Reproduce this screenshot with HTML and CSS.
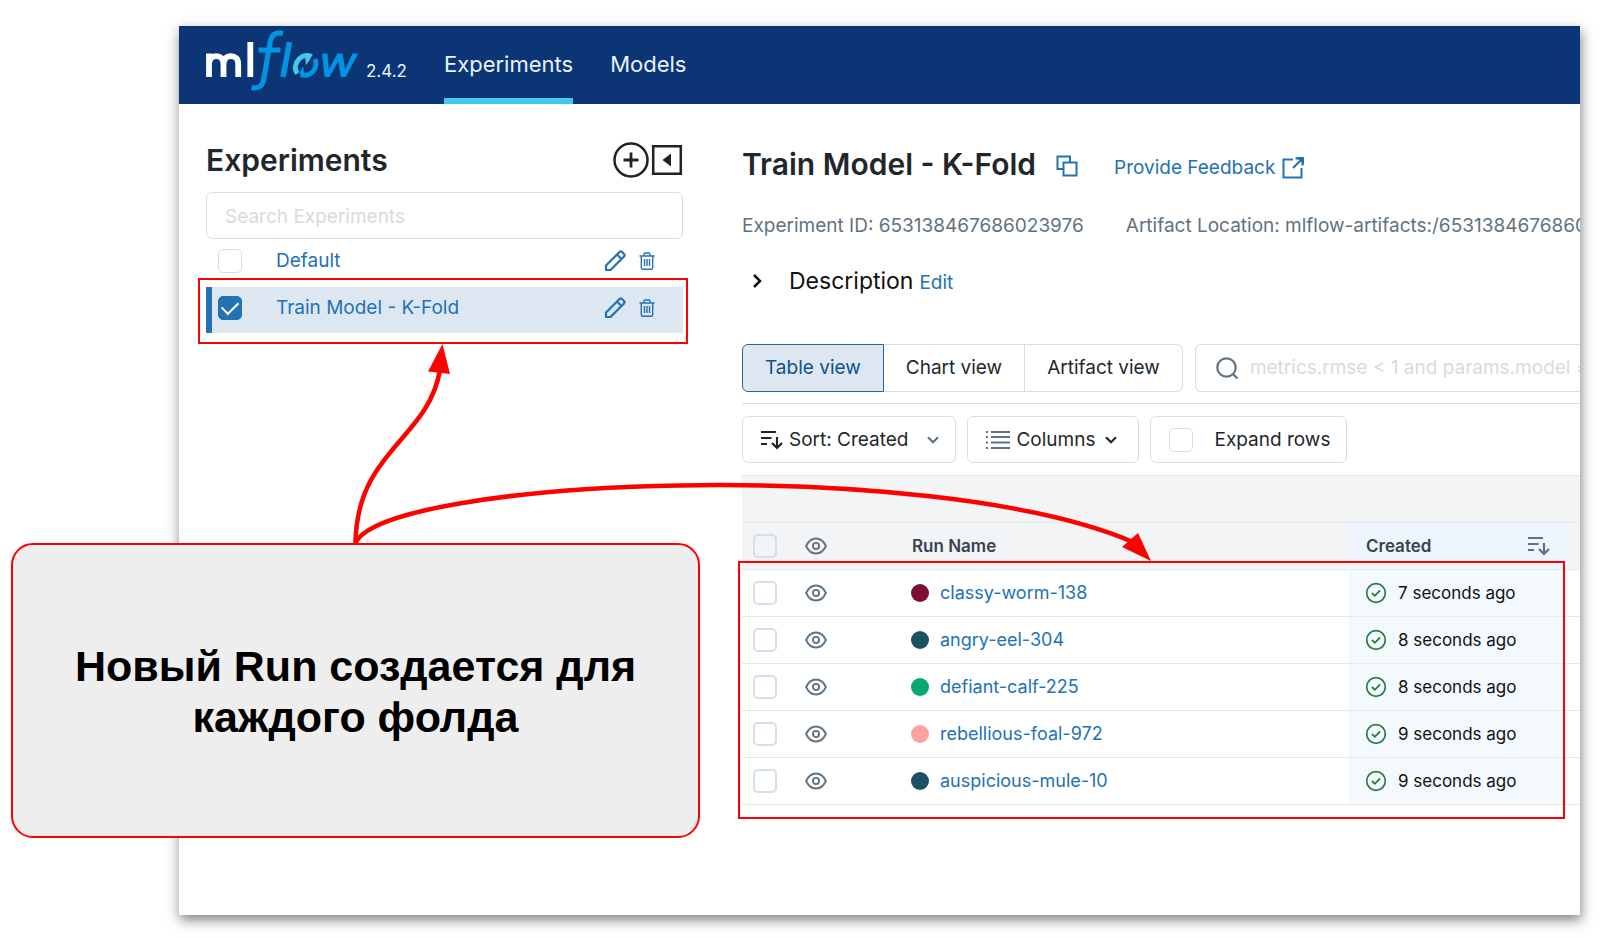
FILE: index.html
```html
<!DOCTYPE html>
<html lang="ru">
<head>
<meta charset="utf-8">
<meta name="viewport" content="width=device-width, initial-scale=1">
<title>MLflow – Train Model - K-Fold</title>
<link rel="stylesheet" href="styles.css">
</head>
<body>
<svg class="defs" aria-hidden="true">
  <symbol id="pencil" viewBox="0 0 22 22"><path d="M2 20v-4.500L15.500 2a1.800 1.800 0 0 1 2.500 0l2 2a1.800 1.800 0 0 1 0 2.500L6.500 20zM13 4.500l4.500 4.500" fill="none" stroke="currentColor" stroke-width="2.200" stroke-linejoin="round"/></symbol>
  <symbol id="trash" viewBox="0 0 16 18"><path d="M.5 4h15M2.300 4v11.700a1.500 1.500 0 0 0 1.500 1.500h8.400a1.500 1.500 0 0 0 1.500-1.500V4M5 4V2.200A1.200 1.200 0 0 1 6.200 1h3.600A1.200 1.200 0 0 1 11 2.200V4M5.500 7v7M8 7v7M10.500 7v7" fill="none" stroke="currentColor" stroke-width="1.400"/></symbol>
  <symbol id="eye" viewBox="0 0 20 16"><path d="M1 8C3 3.700 6.200 1.200 10 1.200S17 3.700 19 8c-2 4.300-5.200 6.800-9 6.800S3 12.300 1 8z" fill="none" stroke="currentColor" stroke-width="1.700"/><circle cx="10" cy="8" r="2.800" fill="none" stroke="currentColor" stroke-width="1.700"/></symbol>
  <symbol id="sort" viewBox="0 0 22 20"><path d="M0 2h15M0 8h10.500M0 14h6M16 7v11M11 13l5 5 5-5" fill="none" stroke="currentColor" stroke-width="2.200"/></symbol>
  <symbol id="chevron" viewBox="0 0 12 8"><path d="M1 1.200l5 5 5-5" fill="none" stroke="currentColor" stroke-width="2.200"/></symbol>
  <symbol id="done" viewBox="0 0 22 22"><circle cx="11" cy="11" r="9.300" fill="none" stroke="currentColor" stroke-width="1.700"/><path d="M7 11l2.800 2.800L15 8.500" fill="none" stroke="currentColor" stroke-width="1.800"/></symbol>
</svg>
<div class="slide">
  <div class="app">
    <header class="topbar">
      <a class="logo" href="#" aria-label="mlflow">
        <svg width="154" height="62" viewBox="0 0 154 62">
          <g fill="none" stroke="#fff" stroke-width="5.800">
            <path d="M3 47V23.500M3 35c0-6 2.700-8.800 7.200-8.800s7.300 2.600 7.300 7.600V47M17.500 35c0-6 3-8.800 7.400-8.800s7.300 2.600 7.300 7.600V47M44.300 47V12"/>
          </g>
          <path d="M77 3.500c-7-2-11.500 1-13 9L58 48c-1.300 8-5 11-12.500 9.500M52.500 20h22" fill="none" stroke="#0194e2" stroke-width="5.200"/>
          <path d="M83.500 12L77 47" fill="none" stroke="#0194e2" stroke-width="5.500"/>
          <path d="M91.500 43.500c-3.500-4-2.500-10.500 1.500-14.500 3.500-3.500 8-4.300 12-3" fill="none" stroke="#43c9ed" stroke-width="4.800"/>
          <path d="M99 26l8-2-4 7-3 4z" fill="#43c9ed"/>
          <path d="M109 29c2 4 1 9.500-2.500 13-3.500 3.300-8 4-11.500 2.500" fill="none" stroke="#0194e2" stroke-width="4.800"/>
          <path d="M93 44l4-8 1 6 3 4z" fill="#0194e2"/>
          <path d="M116 23.500h5.500l1.200 16L131.500 23.500h5.200l2.300 16 7.500-16h5.700L139.700 47h-4.800l-2.600-15.500L123.500 47h-4.900z" fill="#0194e2"/>
        </svg>
      </a>
      <span class="version">2.4.2</span>
      <nav class="nav">
        <a class="nav-link is-active" href="#">Experiments</a>
        <a class="nav-link" href="#">Models</a>
      </nav>
    </header>
    <div class="body">
      <aside class="sidebar">
        <div class="side-head">
          <h2 class="heading">Experiments</h2>
          <button class="icon-btn" aria-label="New experiment"><svg width="36" height="36" viewBox="0 0 36 36" fill="none" stroke="#222" stroke-width="2.500"><circle cx="18" cy="18" r="16.500"/><path d="M18 10.500v15M10.500 18h15" stroke-width="2.800"/></svg></button>
          <button class="icon-btn" aria-label="Collapse"><svg width="32" height="32" viewBox="0 0 32 32"><path d="M2.200 2.200h27.600v27.600H2.200z" fill="none" stroke="#222" stroke-width="2.500"/><path d="M20 9.500v13L11.500 16z" fill="#222"/></svg></button>
        </div>
        <input class="side-search" type="text" placeholder="Search Experiments" aria-label="Search Experiments">
        <div class="exp">
          <input class="check" type="checkbox" aria-label="Select Default">
          <a class="exp-name" href="#">Default</a>
          <button class="icon-btn" aria-label="Rename"><svg width="22" height="22"><use href="#pencil"/></svg></button>
          <button class="icon-btn" aria-label="Delete"><svg width="16" height="18"><use href="#trash"/></svg></button>
        </div>
        <div class="exp is-selected">
          <input class="check" type="checkbox" checked aria-label="Select Train Model - K-Fold">
          <a class="exp-name" href="#">Train Model - K-Fold</a>
          <button class="icon-btn" aria-label="Rename"><svg width="22" height="22"><use href="#pencil"/></svg></button>
          <button class="icon-btn" aria-label="Delete"><svg width="16" height="18"><use href="#trash"/></svg></button>
        </div>
      </aside>
      <main class="main">
        <div class="title-row">
          <h1 class="heading">Train Model - K-Fold</h1>
          <button class="icon-btn copy" aria-label="Copy"><svg width="22" height="22" viewBox="0 0 22 22" fill="none" stroke="currentColor" stroke-width="2"><path d="M7 14H1.500V1.500h12.500V7"/><path d="M7.500 7.500h13v13h-13z"/></svg></button>
          <a class="feedback" href="#">Provide Feedback <svg width="22" height="22" viewBox="0 0 22 22" fill="none" stroke="currentColor" stroke-width="2"><path d="M11 2.500H1.500v18h18V11M13.500 1.500h7V8.500M20.500 1.500L11 11"/><path d="M14 0h8v8z" fill="currentColor" stroke="none"/></svg></a>
        </div>
        <div class="meta"><span>Experiment ID: 653138467686023976</span><span>Artifact Location: mlflow-artifacts:/653138467686023976</span></div>
        <div class="desc">
          <button class="icon-btn" aria-label="Expand"><svg width="12" height="16" viewBox="0 0 12 16"><path d="M2 2l6 6-6 6" fill="none" stroke="#111" stroke-width="2.500"/></svg></button>
          <span class="desc-label">Description</span>
          <a href="#">Edit</a>
        </div>
        <div class="views">
          <div class="tabs">
            <button class="tab is-active">Table view</button>
            <button class="tab">Chart view</button>
            <button class="tab">Artifact view</button>
          </div>
          <label class="search"><svg width="22" height="22" viewBox="0 0 22 22" fill="none" stroke="#5f7281" stroke-width="2.200"><circle cx="10.500" cy="10.500" r="9.200"/><path d="M17 17l4.500 4.500"/></svg><input type="text" placeholder="metrics.rmse &lt; 1 and params.model = &quot;tree&quot;" aria-label="Search runs"></label>
        </div>
        <div class="tools">
          <button class="tool sort"><svg width="22" height="20"><use href="#sort"/></svg>Sort: Created<svg class="caret" width="12" height="8"><use href="#chevron"/></svg></button>
          <button class="tool cols"><svg width="24" height="20" viewBox="0 0 24 20" stroke="#5f7281" stroke-width="2.200"><path d="M5 2h19M5 7h19M5 12.500h19M5 18h19M0 2h2M0 7h2M0 12.500h2M0 18h2"/></svg>Columns<svg class="caret" width="12" height="8"><use href="#chevron"/></svg></button>
          <label class="tool expand"><input class="check" type="checkbox">Expand rows</label>
        </div>
        <table class="runs">
          <colgroup><col class="c-check"><col class="c-eye"><col><col class="c-created"><col class="c-rest"></colgroup>
          <thead>
            <tr class="group"><th colspan="5"></th></tr>
            <tr>
              <th><input class="check" type="checkbox" aria-label="Select all"></th>
              <th><svg class="eye" width="22" height="18"><use href="#eye"/></svg></th>
              <th class="name-head">Run Name</th>
              <th class="created"><div class="cell">Created<svg class="sort-icon" width="22" height="20"><use href="#sort"/></svg></div></th>
              <th></th>
            </tr>
          </thead>
          <tbody>
            <tr><td><input class="check" type="checkbox" aria-label="Select classy-worm-138"></td><td><svg class="eye" width="22" height="18"><use href="#eye"/></svg></td><td><div class="cell run"><i class="dot maroon"></i><a href="#">classy-worm-138</a></div></td><td class="created"><div class="cell"><svg class="done" width="22" height="22"><use href="#done"/></svg>7 seconds ago</div></td><td></td></tr>
            <tr><td><input class="check" type="checkbox" aria-label="Select angry-eel-304"></td><td><svg class="eye" width="22" height="18"><use href="#eye"/></svg></td><td><div class="cell run"><i class="dot teal"></i><a href="#">angry-eel-304</a></div></td><td class="created"><div class="cell"><svg class="done" width="22" height="22"><use href="#done"/></svg>8 seconds ago</div></td><td></td></tr>
            <tr><td><input class="check" type="checkbox" aria-label="Select defiant-calf-225"></td><td><svg class="eye" width="22" height="18"><use href="#eye"/></svg></td><td><div class="cell run"><i class="dot green"></i><a href="#">defiant-calf-225</a></div></td><td class="created"><div class="cell"><svg class="done" width="22" height="22"><use href="#done"/></svg>8 seconds ago</div></td><td></td></tr>
            <tr><td><input class="check" type="checkbox" aria-label="Select rebellious-foal-972"></td><td><svg class="eye" width="22" height="18"><use href="#eye"/></svg></td><td><div class="cell run"><i class="dot pink"></i><a href="#">rebellious-foal-972</a></div></td><td class="created"><div class="cell"><svg class="done" width="22" height="22"><use href="#done"/></svg>9 seconds ago</div></td><td></td></tr>
            <tr><td><input class="check" type="checkbox" aria-label="Select auspicious-mule-10"></td><td><svg class="eye" width="22" height="18"><use href="#eye"/></svg></td><td><div class="cell run"><i class="dot teal"></i><a href="#">auspicious-mule-10</a></div></td><td class="created"><div class="cell"><svg class="done" width="22" height="22"><use href="#done"/></svg>9 seconds ago</div></td><td></td></tr>
          </tbody>
        </table>
      </main>
    </div>
  </div>
  <div class="mark mark-exp"></div>
  <div class="mark mark-runs"></div>
  <svg class="arrows" width="1180" height="580" viewBox="0 0 1180 580" aria-hidden="true">
    <g fill="none" stroke="#f00" stroke-width="4.500">
      <path d="M355.500 543C357 450 428 440 440 370"/>
      <path d="M355.500 543C385 478 930 455 1133 542"/>
    </g>
    <path d="M442.500 344l7.500 30-22-2.500zM1151 561l-29-14 16-14z" fill="#f00"/>
  </svg>
  <div class="callout">Новый Run создается для каждого фолда</div>
</div>
</body>
</html>
```
FILE: styles.css
```css
* { box-sizing: border-box; }
body { margin: 0; background: #fff; color: #1f272d; font: 19px/24px Inter, "Liberation Sans", sans-serif; }
a { color: #2272b4; text-decoration: none; }
button, input { font: inherit; color: inherit; }
svg { flex: none; display: block; }
.defs { position: absolute; width: 0; height: 0; }
.slide { position: relative; display: flex; min-height: 100vh; padding: 26px 24px 23px 179px; overflow: hidden; }
.app { flex: 1; min-width: 0; display: flex; flex-direction: column; background: #fff; box-shadow: 1px 5px 12px rgba(0, 0, 0, .5); }

.topbar { display: flex; height: 78px; padding-left: 27px; background: #0b3574; color: #e7f1fb; }
.logo { padding-top: 4px; }
.version { margin-left: 6px; padding-top: 33px; font-size: 17px; }
.nav { display: flex; gap: 37px; margin-left: 37px; font-size: 22px; }
.nav-link { display: flex; align-items: center; color: #e7f1fb; border-top: 4px solid transparent; border-bottom: 6px solid transparent; }
.nav-link.is-active { border-bottom-color: #43c9ed; }

.body { flex: 1; display: flex; }
.sidebar { flex: 0 0 477px; margin-left: 27px; padding-top: 36px; }
.heading { margin: 0; font-size: 30px; line-height: 40px; font-weight: 600; }
.icon-btn { display: block; padding: 0; border: 0; background: none; color: #2272b4; }
.side-head { display: flex; align-items: center; gap: 2px; height: 40px; margin-bottom: 12px; }
.side-head .heading { flex: 1; }
.side-search { display: block; width: 100%; height: 47px; padding: 2px 18px 0; border: 1px solid #d1dfea; border-radius: 6px; outline: 0; background: #fff; }
::placeholder { color: #dadada; opacity: 1; }
.check { appearance: none; flex: none; display: block; width: 24px; height: 24px; margin: 0; border: 1px solid #d1dfea; border-radius: 5px; background: #fff; }
.check:checked { border-color: #2272b4; background: #2272b4; display: grid; place-items: center; }
.check:checked::before { content: ""; width: 14px; height: 8px; border: solid #fff; border-width: 0 0 2px 2px; rotate: -45deg; margin-bottom: 4px; }
.exp { display: flex; align-items: center; height: 46px; padding: 0 28px 2px 6px; border-left: 6px solid transparent; }
.exp.is-selected { margin-top: 2px; padding-bottom: 5px; border-left-color: #2272b4; background: #dde7f1; }
.exp-name { flex: 1; padding-left: 34px; }
.exp .icon-btn + .icon-btn { margin-left: 13px; }

.main { flex: 1; min-width: 0; margin-left: 59px; padding-top: 40px; overflow: hidden; }
.title-row { display: flex; align-items: flex-end; height: 40px; }
.title-row .heading { white-space: nowrap; }
.copy { margin: 0 36px 7px 20px; }
.feedback { display: flex; gap: 7px; align-items: center; margin-bottom: 4px; white-space: nowrap; }
.meta { display: flex; gap: 42px; margin-top: 30px; color: #5f7281; white-space: nowrap; }
.desc { display: flex; align-items: baseline; margin-top: 29px; padding-left: 10px; line-height: 28px; }
.desc .icon-btn { width: 37px; }
.desc-label { margin-right: 6px; font-size: 23px; color: #111; }
.views { display: flex; gap: 12px; margin-top: 47px; padding-bottom: 11px; border-bottom: 1px solid #d1dfea; }
.tabs { display: flex; }
.tab { height: 48px; padding: 0 22px; border: 1px solid #d1dfea; border-left-width: 0; background: #fff; white-space: nowrap; }
.tab.is-active { border: 1px solid #2f6390; border-radius: 6px 0 0 6px; background: #dde7f1; color: #0e538b; }
.tab:last-child { border-radius: 0 6px 6px 0; }
.search { flex: 1; min-width: 0; display: flex; align-items: center; gap: 12px; height: 48px; padding-left: 20px; border: 1px solid #d1dfea; border-right: 0; border-radius: 6px 0 0 6px; }
.search input { flex: 1; min-width: 0; padding: 0; border: 0; outline: 0; }
.tools { display: flex; gap: 11px; margin: 12px 0; }
.tool { display: flex; align-items: center; height: 47px; padding: 0 16px 0 18px; border: 1px solid #d1dfea; border-radius: 6px; background: #fff; white-space: nowrap; }
.sort svg:first-child, .cols svg:first-child { margin-right: 6px; }
.sort .caret { margin-left: 19px; color: #5f7281; }
.cols .caret { margin-left: 10px; margin-right: 5px; }
.expand .check { margin-right: 21px; }

.runs { width: 100%; border-collapse: collapse; table-layout: fixed; font-size: 17px; }
.c-check { width: 63px; }
.c-eye { width: 105px; }
.c-created { width: 219px; }
.c-rest { width: 12px; }
.runs th, .runs td { height: 47px; padding: 0; border-bottom: 1px solid #e3ebf1; text-align: left; }
.runs th { background: #f2f4f6; color: #37444f; font-weight: 600; }
.runs .group th { border-top: 1px solid #dce6ee; }
.runs .check { margin-left: 11px; border-width: 2px; border-color: #d4dfe9; }
.runs th .check { background: none; }
.eye { color: #5f7281; }
.runs .name-head { padding-left: 2px; }
.cell { display: flex; align-items: center; }
.run { font-size: 18px; }
.dot { width: 18px; height: 18px; margin-right: 11px; margin-left: 1px; border-radius: 50%; }
.maroon { background: #7d0f35; }
.teal { background: #1b5162; }
.green { background: #07a870; }
.pink { background: #fca3a1; }
.runs .created { padding-left: 16px; color: #111; }
.runs td.created { background: #f4f9fe; }
.runs th.created { padding-left: 17px; background: #eff5fe; color: #37444f; }
.sort-icon { margin-left: auto; margin-right: 18px; color: #5f7281; }
.done { margin-right: 11px; color: #277c43; }

/* Annotations laid over the application */
.mark { position: absolute; border: 2px solid #f00; }
.mark-exp { left: 198px; top: 278px; width: 490px; height: 66px; }
.mark-runs { left: 738px; top: 561px; width: 827px; height: 258px; }
.arrows { position: absolute; left: 0; top: 0; }
.callout { position: absolute; left: 11px; top: 543px; width: 689px; height: 295px; display: flex; align-items: center; padding: 2px 50px 0; border: 2px solid #f00; border-radius: 22px; background: #eee; color: #000; font: bold 43px/51px "Liberation Sans", Arial, sans-serif; text-align: center; }
```
